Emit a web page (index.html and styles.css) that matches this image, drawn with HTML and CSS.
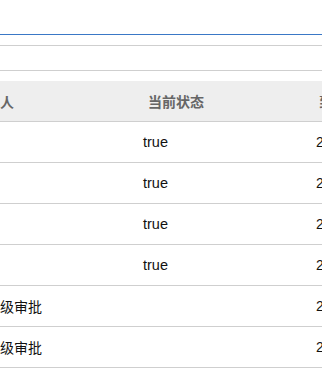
FILE: index.html
```html
<!DOCTYPE html>
<html lang="zh">
<head>
<meta charset="utf-8">
<link rel="stylesheet" href="styles.css">
</head>
<body>
<div class="page">
  <div class="tabs"></div>
  <div class="toolbar"></div>
  <div class="table-wrap">
    <div class="table">
      <div class="row head">
        <div class="c1"><span class="shift">审批人</span></div>
        <div class="c2">当前状态</div>
        <div class="c3 h3">到达时间</div>
      </div>
      <div class="row"><div class="c1"></div><div class="c2 b2">true</div><div class="c3">2019-06-01 10:00</div></div>
      <div class="row"><div class="c1"></div><div class="c2 b2">true</div><div class="c3">2019-06-01 10:00</div></div>
      <div class="row"><div class="c1"></div><div class="c2 b2">true</div><div class="c3">2019-06-01 10:00</div></div>
      <div class="row"><div class="c1"></div><div class="c2 b2">true</div><div class="c3">2019-06-01 10:00</div></div>
      <div class="row"><div class="c1">二级审批</div><div class="c2 b2"></div><div class="c3">2019-06-01 10:00</div></div>
      <div class="row"><div class="c1">二级审批</div><div class="c2 b2"></div><div class="c3">2019-06-01 10:00</div></div>
    </div>
  </div>
</div>
</body>
</html>
```

FILE: styles.css
```css
html, body {
  margin: 0;
  padding: 0;
  background: #fff;
}
.page {
  width: 322px;
  height: 380px;
  overflow: hidden;
  font-family: "Liberation Sans", "Noto Sans CJK SC", sans-serif;
  font-size: 14px;
  color: #111;
}
.tabs {
  height: 34px;
  border-bottom: 1px solid #3a78c6;
}
.toolbar {
  margin-top: 10px;
  height: 24px;
  border-top: 1px solid #cfcfcf;
  border-bottom: 1px solid #cfcfcf;
}
.table-wrap {
  margin-top: 10px;
  overflow: hidden;
}
.table {
  margin-left: -14px;
  width: 600px;
}
.row {
  display: flex;
  height: 40px;
  align-items: center;
  border-bottom: 1px solid #cfcfcf;
  white-space: nowrap;
}
.row.head {
  background: #eeeeee;
  font-weight: bold;
  color: #666;
}
.c1 {
  width: 157px;
  flex: none;
}
.c2 {
  width: 173px;
  flex: none;
  padding-left: 5px;
  box-sizing: border-box;
}
.b2 {
  padding-left: 0;
  font-size: 14.5px;
}
.c3 {
  flex: 1;
}
.h3 {
  padding-left: 3px;
}
.shift {
  margin-left: -14px;
}
```
